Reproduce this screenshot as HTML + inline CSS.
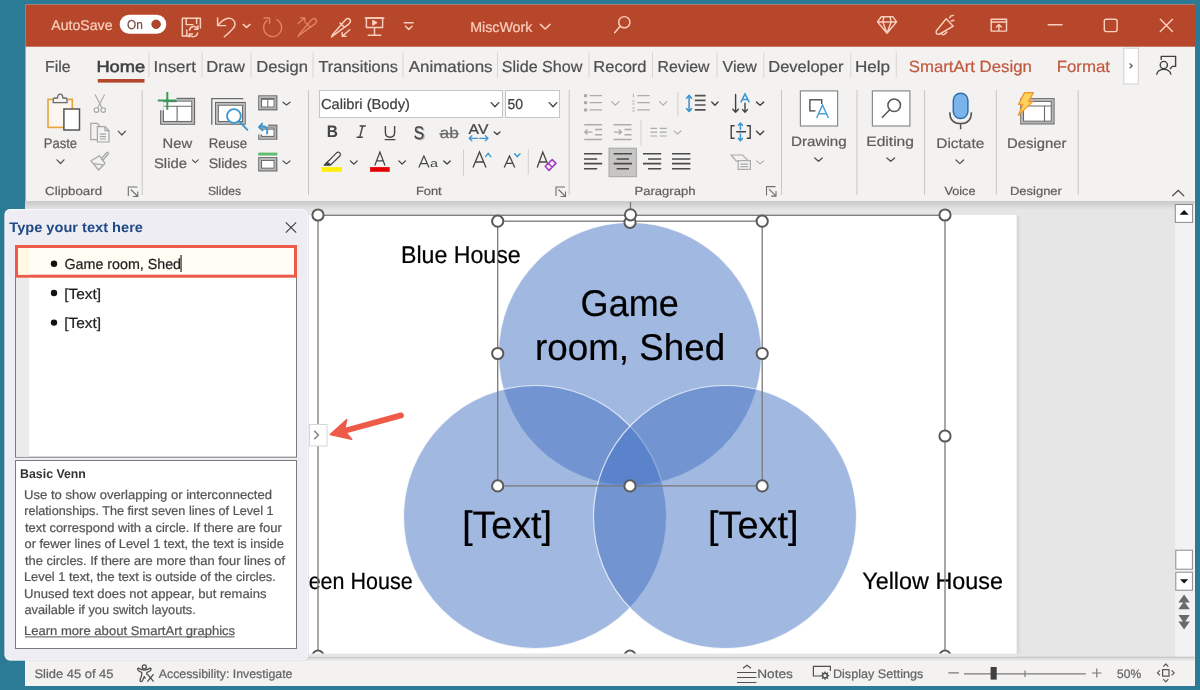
<!DOCTYPE html>
<html><head><meta charset="utf-8"><title>PowerPoint</title>
<style>
html,body{margin:0;padding:0;width:1200px;height:690px;overflow:hidden;background:#2C7B96;font-family:"Liberation Sans",sans-serif}
svg{position:absolute;left:0;top:0;display:block;will-change:transform}
</style></head><body>
<svg width="1200" height="690" viewBox="0 0 1200 690" text-rendering="geometricPrecision">
<rect x="0" y="0" width="1200" height="690" fill="#2C7B96"/>
<rect x="25.5" y="4.5" width="1169.5" height="681.5" fill="#F3F2F1"/>
<rect x="25.5" y="4.5" width="1169.5" height="42.2" fill="#B7472A"/>
<rect x="25" y="201" width="1169.5" height="459.5" fill="#E6E6E6"/>
<defs><linearGradient id="rsh" x1="0" y1="0" x2="0" y2="1"><stop offset="0" stop-color="#C8C8C8"/><stop offset="1" stop-color="#E6E6E6"/></linearGradient></defs>
<rect x="25" y="201" width="1169.5" height="9" fill="url(#rsh)"/>
<rect x="1175" y="204" width="20" height="452.7" fill="#F2F2F2"/>
<defs><linearGradient id="ssh" x1="0" y1="0" x2="1" y2="0"><stop offset="0" stop-color="#D2D2D2"/><stop offset="1" stop-color="#E6E6E6"/></linearGradient></defs>
<rect x="1016.5" y="216" width="5" height="438" fill="url(#ssh)"/>
<rect x="250" y="215" width="766.6" height="438.7" fill="#FFFFFF"/>
<rect x="25" y="656.7" width="1169.5" height="1.3" fill="#C8C8C8"/>
<rect x="25" y="658" width="1169.5" height="2.5" fill="#E0E0E0"/>
<rect x="25" y="660.5" width="1169.5" height="25.5" fill="#F3F2F1"/>
<text x="51.30" y="30.2" style="font-size:14.1px;font-weight:400;font-family:&quot;Liberation Sans&quot;" fill="#F9D0BF" textLength="61.24" lengthAdjust="spacingAndGlyphs"  stroke="#F9D0BF" stroke-width="0.22">AutoSave</text>
<text x="470.20" y="31.8" style="font-size:14.24px;font-weight:400;font-family:&quot;Liberation Sans&quot;" fill="#F9D0BF" textLength="62.22" lengthAdjust="spacingAndGlyphs"  stroke="#F9D0BF" stroke-width="0.22">MiscWork</text>
<text x="45.10" y="71.7" style="font-size:15.84px;font-weight:400;font-family:&quot;Liberation Sans&quot;" fill="#505050" textLength="25.51" lengthAdjust="spacingAndGlyphs"  stroke="#505050" stroke-width="0.22">File</text>
<text x="96.41" y="71.7" style="font-size:15.84px;font-weight:400;font-family:&quot;Liberation Sans&quot;" fill="#404040" textLength="48.79" lengthAdjust="spacingAndGlyphs" stroke="#404040" stroke-width="0.55">Home</text>
<text x="153.50" y="71.7" style="font-size:15.84px;font-weight:400;font-family:&quot;Liberation Sans&quot;" fill="#505050" textLength="42.41" lengthAdjust="spacingAndGlyphs"  stroke="#505050" stroke-width="0.22">Insert</text>
<text x="206.24" y="71.7" style="font-size:15.84px;font-weight:400;font-family:&quot;Liberation Sans&quot;" fill="#505050" textLength="38.69" lengthAdjust="spacingAndGlyphs"  stroke="#505050" stroke-width="0.22">Draw</text>
<text x="256.24" y="71.7" style="font-size:15.84px;font-weight:400;font-family:&quot;Liberation Sans&quot;" fill="#505050" textLength="51.82" lengthAdjust="spacingAndGlyphs"  stroke="#505050" stroke-width="0.22">Design</text>
<text x="318.44" y="71.7" style="font-size:15.84px;font-weight:400;font-family:&quot;Liberation Sans&quot;" fill="#505050" textLength="79.60" lengthAdjust="spacingAndGlyphs"  stroke="#505050" stroke-width="0.22">Transitions</text>
<text x="408.75" y="71.7" style="font-size:15.84px;font-weight:400;font-family:&quot;Liberation Sans&quot;" fill="#505050" textLength="83.80" lengthAdjust="spacingAndGlyphs"  stroke="#505050" stroke-width="0.22">Animations</text>
<text x="501.79" y="71.7" style="font-size:15.84px;font-weight:400;font-family:&quot;Liberation Sans&quot;" fill="#505050" textLength="80.65" lengthAdjust="spacingAndGlyphs"  stroke="#505050" stroke-width="0.22">Slide Show</text>
<text x="593.25" y="71.7" style="font-size:15.84px;font-weight:400;font-family:&quot;Liberation Sans&quot;" fill="#505050" textLength="53.31" lengthAdjust="spacingAndGlyphs"  stroke="#505050" stroke-width="0.22">Record</text>
<text x="657.55" y="71.7" style="font-size:15.84px;font-weight:400;font-family:&quot;Liberation Sans&quot;" fill="#505050" textLength="51.89" lengthAdjust="spacingAndGlyphs"  stroke="#505050" stroke-width="0.22">Review</text>
<text x="722.50" y="71.7" style="font-size:15.84px;font-weight:400;font-family:&quot;Liberation Sans&quot;" fill="#505050" textLength="34.44" lengthAdjust="spacingAndGlyphs"  stroke="#505050" stroke-width="0.22">View</text>
<text x="768.25" y="71.7" style="font-size:15.84px;font-weight:400;font-family:&quot;Liberation Sans&quot;" fill="#505050" textLength="75.18" lengthAdjust="spacingAndGlyphs"  stroke="#505050" stroke-width="0.22">Developer</text>
<text x="854.95" y="71.7" style="font-size:15.84px;font-weight:400;font-family:&quot;Liberation Sans&quot;" fill="#505050" textLength="35.20" lengthAdjust="spacingAndGlyphs"  stroke="#505050" stroke-width="0.22">Help</text>
<text x="908.78" y="71.7" style="font-size:16.28px;font-weight:400;font-family:&quot;Liberation Sans&quot;" fill="#C25840" textLength="123.06" lengthAdjust="spacingAndGlyphs"  stroke="#C25840" stroke-width="0.22">SmartArt Design</text>
<text x="1056.65" y="71.7" style="font-size:16.28px;font-weight:400;font-family:&quot;Liberation Sans&quot;" fill="#C25840" textLength="53.37" lengthAdjust="spacingAndGlyphs"  stroke="#C25840" stroke-width="0.22">Format</text>
<rect x="97.8" y="79" width="46.7" height="3.6" fill="#B7472A"/>
<rect x="148.5" y="52.5" width="1" height="25" fill="#D8D6D4"/>
<rect x="201.5" y="52.5" width="1" height="25" fill="#D8D6D4"/>
<rect x="250.5" y="52.5" width="1" height="25" fill="#D8D6D4"/>
<rect x="312.5" y="52.5" width="1" height="25" fill="#D8D6D4"/>
<rect x="402.5" y="52.5" width="1" height="25" fill="#D8D6D4"/>
<rect x="497.0" y="52.5" width="1" height="25" fill="#D8D6D4"/>
<rect x="588.5" y="52.5" width="1" height="25" fill="#D8D6D4"/>
<rect x="652.0" y="52.5" width="1" height="25" fill="#D8D6D4"/>
<rect x="716.5" y="52.5" width="1" height="25" fill="#D8D6D4"/>
<rect x="763.25" y="52.5" width="1" height="25" fill="#D8D6D4"/>
<rect x="850.25" y="52.5" width="1" height="25" fill="#D8D6D4"/>
<rect x="895.75" y="52.5" width="1" height="25" fill="#D8D6D4"/>
<text x="43.76" y="148.05" style="font-size:13.74px;font-weight:400;font-family:&quot;Liberation Sans&quot;" fill="#605E5C" textLength="33.36" lengthAdjust="spacingAndGlyphs"  stroke="#605E5C" stroke-width="0.22">Paste</text>
<text x="45.13" y="195.4" style="font-size:11.77px;font-weight:400;font-family:&quot;Liberation Sans&quot;" fill="#605E5C" textLength="57.01" lengthAdjust="spacingAndGlyphs"  stroke="#605E5C" stroke-width="0.22">Clipboard</text>
<text x="162.62" y="148.05" style="font-size:13.74px;font-weight:400;font-family:&quot;Liberation Sans&quot;" fill="#605E5C" textLength="29.60" lengthAdjust="spacingAndGlyphs"  stroke="#605E5C" stroke-width="0.22">New</text>
<text x="153.95" y="167.7" style="font-size:13.74px;font-weight:400;font-family:&quot;Liberation Sans&quot;" fill="#605E5C" textLength="33.03" lengthAdjust="spacingAndGlyphs"  stroke="#605E5C" stroke-width="0.22">Slide</text>
<text x="208.63" y="148.05" style="font-size:13.74px;font-weight:400;font-family:&quot;Liberation Sans&quot;" fill="#605E5C" textLength="38.59" lengthAdjust="spacingAndGlyphs"  stroke="#605E5C" stroke-width="0.22">Reuse</text>
<text x="208.68" y="167.7" style="font-size:13.74px;font-weight:400;font-family:&quot;Liberation Sans&quot;" fill="#605E5C" textLength="38.50" lengthAdjust="spacingAndGlyphs"  stroke="#605E5C" stroke-width="0.22">Slides</text>
<text x="207.99" y="195.4" style="font-size:11.77px;font-weight:400;font-family:&quot;Liberation Sans&quot;" fill="#605E5C" textLength="33.01" lengthAdjust="spacingAndGlyphs"  stroke="#605E5C" stroke-width="0.22">Slides</text>
<text x="415.92" y="195.4" style="font-size:11.77px;font-weight:400;font-family:&quot;Liberation Sans&quot;" fill="#605E5C" textLength="25.76" lengthAdjust="spacingAndGlyphs"  stroke="#605E5C" stroke-width="0.22">Font</text>
<text x="634.50" y="195.4" style="font-size:11.77px;font-weight:400;font-family:&quot;Liberation Sans&quot;" fill="#605E5C" textLength="61.03" lengthAdjust="spacingAndGlyphs"  stroke="#605E5C" stroke-width="0.22">Paragraph</text>
<text x="791.02" y="145.75" style="font-size:13.59px;font-weight:400;font-family:&quot;Liberation Sans&quot;" fill="#605E5C" textLength="55.74" lengthAdjust="spacingAndGlyphs"  stroke="#605E5C" stroke-width="0.22">Drawing</text>
<text x="866.24" y="145.75" style="font-size:13.59px;font-weight:400;font-family:&quot;Liberation Sans&quot;" fill="#605E5C" textLength="47.75" lengthAdjust="spacingAndGlyphs"  stroke="#605E5C" stroke-width="0.22">Editing</text>
<text x="936.28" y="148.1" style="font-size:13.95px;font-weight:400;font-family:&quot;Liberation Sans&quot;" fill="#605E5C" textLength="48.03" lengthAdjust="spacingAndGlyphs"  stroke="#605E5C" stroke-width="0.22">Dictate</text>
<text x="944.50" y="195.4" style="font-size:11.77px;font-weight:400;font-family:&quot;Liberation Sans&quot;" fill="#605E5C" textLength="30.98" lengthAdjust="spacingAndGlyphs"  stroke="#605E5C" stroke-width="0.22">Voice</text>
<text x="1007.03" y="148.1" style="font-size:13.95px;font-weight:400;font-family:&quot;Liberation Sans&quot;" fill="#605E5C" textLength="59.43" lengthAdjust="spacingAndGlyphs"  stroke="#605E5C" stroke-width="0.22">Designer</text>
<text x="1010.01" y="195.4" style="font-size:11.77px;font-weight:400;font-family:&quot;Liberation Sans&quot;" fill="#605E5C" textLength="51.87" lengthAdjust="spacingAndGlyphs"  stroke="#605E5C" stroke-width="0.22">Designer</text>
<rect x="141.7" y="90" width="1" height="105" fill="#C8C6C4"/>
<rect x="308.0" y="90" width="1" height="105" fill="#C8C6C4"/>
<rect x="568.7" y="90" width="1" height="105" fill="#C8C6C4"/>
<rect x="781.0" y="90" width="1" height="105" fill="#C8C6C4"/>
<rect x="856.5" y="90" width="1" height="105" fill="#C8C6C4"/>
<rect x="924.1" y="90" width="1" height="105" fill="#C8C6C4"/>
<rect x="995.8" y="90" width="1" height="105" fill="#C8C6C4"/>
<rect x="1077.7" y="90" width="1" height="105" fill="#C8C6C4"/>
<rect x="319.5" y="90.5" width="183" height="27" fill="#FFF" stroke="#C8C6C4" stroke-width="1"/>
<rect x="505.5" y="90.5" width="54" height="27" fill="#FFF" stroke="#C8C6C4" stroke-width="1"/>
<text x="320.99" y="109.2" style="font-size:14.39px;font-weight:400;font-family:&quot;Liberation Sans&quot;" fill="#404040" textLength="88.92" lengthAdjust="spacingAndGlyphs"  stroke="#404040" stroke-width="0.22">Calibri (Body)</text>
<text x="507.51" y="109.2" style="font-size:14.39px;font-weight:400;font-family:&quot;Liberation Sans&quot;" fill="#404040" textLength="15.57" lengthAdjust="spacingAndGlyphs"  stroke="#404040" stroke-width="0.22">50</text>
<g fill="#4472C4" fill-opacity="0.5" stroke="#FFFFFF" stroke-width="1.2" stroke-opacity="0.7"><circle cx="630" cy="354" r="131.5"/><circle cx="535" cy="517" r="131.5"/><circle cx="725" cy="517" r="131.5"/></g>
<text x="580.61" y="315.8" style="font-size:37.21px;font-weight:400;font-family:&quot;Liberation Sans&quot;" fill="#000" textLength="98.15" lengthAdjust="spacingAndGlyphs"  stroke="#000" stroke-width="0.22">Game</text>
<text x="535.10" y="359.8" style="font-size:37.21px;font-weight:400;font-family:&quot;Liberation Sans&quot;" fill="#000" textLength="190.06" lengthAdjust="spacingAndGlyphs"  stroke="#000" stroke-width="0.22">room, Shed</text>
<text x="462.15" y="537.6" style="font-size:38.23px;font-weight:400;font-family:&quot;Liberation Sans&quot;" fill="#000" textLength="89.77" lengthAdjust="spacingAndGlyphs"  stroke="#000" stroke-width="0.22">[Text]</text>
<text x="708.04" y="537.6" style="font-size:38.23px;font-weight:400;font-family:&quot;Liberation Sans&quot;" fill="#000" textLength="90.40" lengthAdjust="spacingAndGlyphs"  stroke="#000" stroke-width="0.22">[Text]</text>
<text x="400.99" y="263.4" style="font-size:24.27px;font-weight:400;font-family:&quot;Liberation Sans&quot;" fill="#000" textLength="119.66" lengthAdjust="spacingAndGlyphs"  stroke="#000" stroke-width="0.22">Blue House</text>
<text x="862.21" y="589" style="font-size:23.69px;font-weight:400;font-family:&quot;Liberation Sans&quot;" fill="#000" textLength="140.75" lengthAdjust="spacingAndGlyphs"  stroke="#000" stroke-width="0.22">Yellow House</text>
<text x="284.79" y="588.9" style="font-size:23.4px;font-weight:400;font-family:&quot;Liberation Sans&quot;" fill="#000" textLength="127.84" lengthAdjust="spacingAndGlyphs"  stroke="#000" stroke-width="0.22">Green House</text>
<defs><clipPath id="frclip"><rect x="250" y="200" width="766" height="453.7"/></clipPath></defs>
<g fill="none" stroke="#7A7A7A" stroke-width="1.3" clip-path="url(#frclip)"><rect x="318" y="215.3" width="627" height="460"/><rect x="497.7" y="221.2" width="264.5" height="264.7"/><line x1="630.5" y1="202" x2="630.5" y2="209"/></g>
<circle cx="318" cy="215" r="5.6" fill="#FFF" stroke="#5A5A5A" stroke-width="2"/>
<circle cx="945" cy="215" r="5.6" fill="#FFF" stroke="#5A5A5A" stroke-width="2"/>
<circle cx="945" cy="436" r="5.6" fill="#FFF" stroke="#5A5A5A" stroke-width="2"/>
<circle cx="497.7" cy="221.2" r="5.6" fill="#FFF" stroke="#5A5A5A" stroke-width="2"/>
<circle cx="762.2" cy="221.2" r="5.6" fill="#FFF" stroke="#5A5A5A" stroke-width="2"/>
<circle cx="497.7" cy="353.5" r="5.6" fill="#FFF" stroke="#5A5A5A" stroke-width="2"/>
<circle cx="762.2" cy="353.5" r="5.6" fill="#FFF" stroke="#5A5A5A" stroke-width="2"/>
<circle cx="497.7" cy="485.9" r="5.6" fill="#FFF" stroke="#5A5A5A" stroke-width="2"/>
<circle cx="630" cy="485.9" r="5.6" fill="#FFF" stroke="#5A5A5A" stroke-width="2"/>
<circle cx="762.2" cy="485.9" r="5.6" fill="#FFF" stroke="#5A5A5A" stroke-width="2"/>
<circle cx="630" cy="222.3" r="5.6" fill="#FFF" stroke="#5A5A5A" stroke-width="2"/>
<circle cx="630.5" cy="214.8" r="5.6" fill="#FFF" stroke="#5A5A5A" stroke-width="2"/>
<g clip-path="url(#slclip)">
<defs><clipPath id="slclip"><rect x="250" y="215" width="766" height="438.7"/></clipPath></defs>
<circle cx="318" cy="656.2" r="5.6" fill="#FFF" stroke="#5A5A5A" stroke-width="2"/>
<circle cx="630" cy="656.2" r="5.6" fill="#FFF" stroke="#5A5A5A" stroke-width="2"/>
<circle cx="945" cy="656.2" r="5.6" fill="#FFF" stroke="#5A5A5A" stroke-width="2"/>
</g>
<rect x="250" y="653.7" width="766" height="3" fill="#E6E6E6"/>
<rect x="4.5" y="209" width="304" height="451.5" rx="5.5" fill="#BFC6CC"/>
<rect x="5.2" y="209.7" width="302.6" height="450.1" rx="5" fill="#EEEDF4" stroke="#F6F8FC" stroke-width="1.2"/>
<text x="9.30" y="232" style="font-size:13.95px;font-weight:700;font-family:&quot;Liberation Sans&quot;" fill="#1E4A86" textLength="133.68" lengthAdjust="spacingAndGlyphs" >Type your text here</text>
<g stroke="#444" stroke-width="1.25"><line x1="285.8" y1="222.4" x2="296.2" y2="232.6"/><line x1="296.2" y1="222.4" x2="285.8" y2="232.6"/></g>
<rect x="15.5" y="245.5" width="281" height="211.7" fill="#FFF" stroke="#7A7A7A" stroke-width="1"/>
<rect x="16" y="246" width="13.3" height="210.7" fill="#EBEBEB"/>
<rect x="16.5" y="246.5" width="279" height="29.7" fill="#FFFDF4" stroke="#EE5A4A" stroke-width="3"/>
<rect x="18" y="248" width="11.3" height="26.7" fill="#FFF8E2"/>
<circle cx="54" cy="263.7" r="3.2" fill="#111"/>
<circle cx="54" cy="293" r="3.2" fill="#111"/>
<circle cx="54" cy="322.6" r="3.2" fill="#111"/>
<text x="64.51" y="268.9" style="font-size:14.53px;font-weight:400;font-family:&quot;Liberation Sans&quot;" fill="#1E1E1E" textLength="116.55" lengthAdjust="spacingAndGlyphs"  stroke="#1E1E1E" stroke-width="0.22">Game room, Shed</text>
<text x="64.16" y="298.7" style="font-size:14.83px;font-weight:400;font-family:&quot;Liberation Sans&quot;" fill="#1E1E1E" textLength="36.90" lengthAdjust="spacingAndGlyphs"  stroke="#1E1E1E" stroke-width="0.22">[Text]</text>
<text x="64.16" y="327.8" style="font-size:14.83px;font-weight:400;font-family:&quot;Liberation Sans&quot;" fill="#1E1E1E" textLength="36.90" lengthAdjust="spacingAndGlyphs"  stroke="#1E1E1E" stroke-width="0.22">[Text]</text>
<rect x="180.5" y="255" width="1.1" height="17" fill="#111"/>
<rect x="15.5" y="460.5" width="281" height="188" fill="#FFF" stroke="#7A7A7A" stroke-width="1"/>
<text x="20.12" y="477.8" style="font-size:12.65px;font-weight:700;font-family:&quot;Liberation Sans&quot;" fill="#333" textLength="65.79" lengthAdjust="spacingAndGlyphs" >Basic Venn</text>
<text x="24.07" y="498.7" style="font-size:12.65px;font-weight:400;font-family:&quot;Liberation Sans&quot;" fill="#555555" textLength="247.89" lengthAdjust="spacingAndGlyphs"  stroke="#555555" stroke-width="0.22">Use to show overlapping or interconnected</text>
<text x="24.20" y="515.23" style="font-size:12.65px;font-weight:400;font-family:&quot;Liberation Sans&quot;" fill="#555555" textLength="249.34" lengthAdjust="spacingAndGlyphs"  stroke="#555555" stroke-width="0.22">relationships. The first seven lines of Level 1</text>
<text x="24.90" y="531.76" style="font-size:12.65px;font-weight:400;font-family:&quot;Liberation Sans&quot;" fill="#555555" textLength="256.82" lengthAdjust="spacingAndGlyphs"  stroke="#555555" stroke-width="0.22">text correspond with a circle. If there are four</text>
<text x="24.49" y="548.29" style="font-size:12.65px;font-weight:400;font-family:&quot;Liberation Sans&quot;" fill="#555555" textLength="259.45" lengthAdjust="spacingAndGlyphs"  stroke="#555555" stroke-width="0.22">or fewer lines of Level 1 text, the text is inside</text>
<text x="24.90" y="564.8199999999999" style="font-size:12.65px;font-weight:400;font-family:&quot;Liberation Sans&quot;" fill="#555555" textLength="260.11" lengthAdjust="spacingAndGlyphs"  stroke="#555555" stroke-width="0.22">the circles. If there are more than four lines of</text>
<text x="23.99" y="581.35" style="font-size:12.65px;font-weight:400;font-family:&quot;Liberation Sans&quot;" fill="#555555" textLength="251.85" lengthAdjust="spacingAndGlyphs"  stroke="#555555" stroke-width="0.22">Level 1 text, the text is outside of the circles.</text>
<text x="24.07" y="597.88" style="font-size:12.65px;font-weight:400;font-family:&quot;Liberation Sans&quot;" fill="#555555" textLength="242.37" lengthAdjust="spacingAndGlyphs"  stroke="#555555" stroke-width="0.22">Unused text does not appear, but remains</text>
<text x="24.49" y="614.41" style="font-size:12.65px;font-weight:400;font-family:&quot;Liberation Sans&quot;" fill="#555555" textLength="171.33" lengthAdjust="spacingAndGlyphs"  stroke="#555555" stroke-width="0.22">available if you switch layouts.</text>
<text x="23.97" y="635.4" style="font-size:12.65px;font-weight:400;font-family:&quot;Liberation Sans&quot;" fill="#555555" textLength="211.17" lengthAdjust="spacingAndGlyphs"  stroke="#555555" stroke-width="0.22">Learn more about SmartArt graphics</text>
<rect x="25" y="636.4" width="209.7" height="1" fill="#555555"/>
<text x="34.48" y="678" style="font-size:12.35px;font-weight:400;font-family:&quot;Liberation Sans&quot;" fill="#646464" textLength="79.01" lengthAdjust="spacingAndGlyphs"  stroke="#646464" stroke-width="0.22">Slide 45 of 45</text>
<text x="158.75" y="678" style="font-size:12.35px;font-weight:400;font-family:&quot;Liberation Sans&quot;" fill="#646464" textLength="133.72" lengthAdjust="spacingAndGlyphs"  stroke="#646464" stroke-width="0.22">Accessibility: Investigate</text>
<text x="757.19" y="678.3" style="font-size:12.35px;font-weight:400;font-family:&quot;Liberation Sans&quot;" fill="#646464" textLength="35.72" lengthAdjust="spacingAndGlyphs"  stroke="#646464" stroke-width="0.22">Notes</text>
<text x="832.98" y="678.3" style="font-size:12.35px;font-weight:400;font-family:&quot;Liberation Sans&quot;" fill="#646464" textLength="90.40" lengthAdjust="spacingAndGlyphs"  stroke="#646464" stroke-width="0.22">Display Settings</text>
<text x="1117.11" y="678.3" style="font-size:12.35px;font-weight:400;font-family:&quot;Liberation Sans&quot;" fill="#646464" textLength="24.06" lengthAdjust="spacingAndGlyphs"  stroke="#646464" stroke-width="0.22">50%</text>
<g fill="none" stroke="#F9D0BF" stroke-width="1.45" stroke-linecap="round" stroke-linejoin="round"><path d="M200.4,28 V18.3 H182.3 V36 H188.4"/><path d="M186.2,18.3 V24.6 H193 M196.6,18.3 V23.6"/><path d="M186.8,36 V30"/><path d="M189.6,30.2 A4.2,4.2 0 0 1 197.6,29"/><path d="M197.9,25.8 V29.3 H194.6"/><path d="M197.6,33 A4.2,4.2 0 0 1 189.6,34.2"/><path d="M189.3,37 V34 H192.6"/><path d="M217.6,18 V25.6 H225.5"/><path d="M218.2,25 C221.5,21 225,18.2 228.6,18.2 C232.5,18.2 235,21 235,24.6 C235,28.3 229.5,32.5 224.3,36.8"/><path d="M243.2,24.4 L246.6,27.4 L250,24.4"/><path d="M404.3,22.7 H413.2"/><path d="M405.5,26.2 L408.8,29.4 L412,26.2"/><path d="M365.2,18 H383.8"/><rect x="366.4" y="18" width="16.2" height="9.4"/><path d="M372.9,20.6 L376.6,22.7 L372.9,24.8 Z" fill="#F9D0BF"/><path d="M374.5,27.4 V35.3 M368.2,35.3 H380.8"/><path d="M333.2,35.6 L331.5,37 L332.5,34.8 L345.3,20 Q347.6,17.4 349.7,19.3 Q351.5,21.2 349.3,23.6 Z"/><path d="M340,23 L344.5,27.2"/><path d="M342.2,36.2 L349.8,29.8 M342.2,36.2 H346 M342.2,36.2 V32.4"/><circle cx="624.3" cy="22.2" r="5.6"/><path d="M620.3,26.2 L614.6,32.8"/><path d="M881.3,16.8 H893 L896.6,21.9 L887,33.2 L877.5,21.9 Z M877.5,21.9 H896.6 M884,16.8 L882.8,21.9 L887,33.2 L891.2,21.9 L890,16.8"/><path d="M936.4,30.8 L946.2,18.8 L953.2,26.2 L939.8,34 Q935.2,35.2 936.4,30.8 Z"/><path d="M941.4,33.4 Q943.2,36.6 946.8,32"/><path d="M949.6,17.8 L951.2,15.8 M951.4,21 L953.8,20.2 M952.6,15.7 L953.4,15.3"/><rect x="991.2" y="19.2" width="15.3" height="11.9"/><path d="M991.2,22 H1006.5 M998.9,30.6 V24.6 M996.4,27 L998.9,24.5 L1001.4,27"/><path d="M1048.2,24.8 H1062"/><rect x="1104.3" y="19.2" width="12.8" height="12.4" rx="2"/><path d="M1160.3,19.2 L1172.5,31.5 M1172.5,19.2 L1160.3,31.5"/></g>
<g fill="none" stroke="#E48467" stroke-width="1.3" stroke-linecap="round" stroke-linejoin="round"><path d="M267.2,20.4 A9,9 0 1 0 276.6,19.5"/><path d="M264,18 H269.6 V23.6"/><path d="M299.2,35.2 L298,36.7 L299.3,34.2 L311.3,20 Q313.6,17.4 315.7,19.3 Q317.5,21.2 315.3,23.6 Z"/><path d="M306,23 L310.5,27.2"/><path d="M298,23.5 L304.8,17.8 M304.8,17.8 H300.6 M304.8,17.8 V22"/></g>
<rect x="119.7" y="14.7" width="46.6" height="19.1" rx="9.55" fill="#FFFFFF"/>
<circle cx="156.1" cy="24.3" r="4.3" fill="#B04628" stroke="#8E3A24" stroke-width="0.8"/>
<text x="126.95" y="28.9" style="font-size:12.94px;font-weight:400;font-family:&quot;Liberation Sans&quot;" fill="#7A4A40" textLength="15.78" lengthAdjust="spacingAndGlyphs"  stroke="#7A4A40" stroke-width="0.22">On</text>
<rect x="48" y="99.4" width="24.3" height="28" fill="#FBF6EE" stroke="#E8A33A" stroke-width="1.6"/>
<path d="M53.2,102.6 V99.4 Q53.2,98 55,98 H57.5 Q57.8,94.2 60.2,94.2 Q62.6,94.2 62.9,98 H65.2 Q67,98 67,99.4 V102.6 Z" fill="#F3F2F1" stroke="#6A6A6A" stroke-width="1.3"/>
<rect x="63.9" y="109" width="15.6" height="21" fill="#FFFFFF" stroke="#555" stroke-width="1.5"/>
<path d="M57,159.8 L60.5,163.5 L64,159.8" fill="none" stroke="#505050" stroke-width="1.2" stroke-linecap="round" stroke-linejoin="round"/>
<g fill="none" stroke="#A6A6A6" stroke-width="1.1"><circle cx="96.4" cy="110.1" r="2.3"/><circle cx="103.2" cy="110.1" r="2.3"/><path d="M97.6,108 L104.6,94.4 M102,108 L95,94.4"/></g>
<g fill="none" stroke="#A6A6A6" stroke-width="1.2"><path d="M97,139.6 H90.8 V123.3 H97.2 L99.8,126"/><path d="M97.4,126.6 H105 L109,130.6 V142 H97.4 Z M105,126.6 V130.6 H109"/><path d="M99.8,134.2 H106 M99.8,136.6 H106 M99.8,139 H106"/></g>
<path d="M118.2,131.2 L121.85,135 L125.5,131.2" fill="none" stroke="#505050" stroke-width="1.2" stroke-linecap="round" stroke-linejoin="round"/>
<g fill="none" stroke="#A6A6A6" stroke-width="1.3" stroke-linejoin="round"><path d="M99.6,155.8 L91,160.8 L98.6,170 L105,163.4 Z"/><path d="M93.4,163.6 L102.8,164.8"/></g>
<path d="M102.6,158.8 L107.4,153.4" stroke="#A6A6A6" stroke-width="3.4" stroke-linecap="round"/><path d="M102.6,158.8 L107.4,153.4" stroke="#F3F2F1" stroke-width="1" stroke-linecap="round"/>
<g fill="none" stroke="#6E6E6E" stroke-width="1.1"><path d="M128.3,196 V187 H137.3"/><path d="M130.8,189.5 L137.8,196.5 M137.8,191.5 V196.5 H132.8"/></g>
<g fill="none" stroke="#6E6E6E" stroke-width="1.1"><path d="M556,196 V187 H565"/><path d="M558.5,189.5 L565.5,196.5 M565.5,191.5 V196.5 H560.5"/></g>
<g fill="none" stroke="#6E6E6E" stroke-width="1.1"><path d="M766.5,195.6 V186.6 H775.5"/><path d="M769.0,189.1 L776.0,196.1 M776.0,191.1 V196.1 H771.0"/></g>
<rect x="160.75" y="98.45" width="33.7" height="25.7" fill="#FFFFFF" stroke="#6A6A6A" stroke-width="1.3"/>
<rect x="162.1" y="99.8" width="31.0" height="23.0" fill="none" stroke="#B4B4B4" stroke-width="1.4"/>
<rect x="163.4" y="101.1" width="28.4" height="20.4" fill="#FFFFFF" stroke="#6A6A6A" stroke-width="1.1"/>
<path d="M163.4,106.3 H191.8 M177.1,106.3 V121.5" stroke="#6A6A6A" stroke-width="1.1"/>
<path d="M157,91 H176.5 V101.6 H163.8 V110.2 H157 Z" fill="#F3F2F1"/>
<path d="M163.4,101.6 H176.5" stroke="#6A6A6A" stroke-width="1.1" fill="none"/>
<path d="M157.8,100.6 H176.7 M167.3,92 V109.7" stroke="#3A9B58" stroke-width="2"/>
<path d="M192.4,159.9 L195.3,162.6 L198.2,159.9" fill="none" stroke="#505050" stroke-width="1.2" stroke-linecap="round" stroke-linejoin="round"/>
<path d="M211.8,124.8 V98.7 H243.3" fill="none" stroke="#6A6A6A" stroke-width="1.3"/>
<rect x="215.65" y="102.55000000000001" width="29.50000000000001" height="21.59999999999999" fill="#FFFFFF" stroke="#6A6A6A" stroke-width="1.3"/>
<rect x="217" y="103.9" width="26.80000000000001" height="18.89999999999999" fill="none" stroke="#B4B4B4" stroke-width="1.4"/>
<rect x="218.3" y="105.2" width="24.20000000000001" height="16.29999999999999" fill="#FFFFFF" stroke="#6A6A6A" stroke-width="1.1"/>
<circle cx="233.9" cy="116" r="6.9" fill="#FFFFFF" stroke="#3C96D0" stroke-width="1.8"/><path d="M238.8,121 L247.4,129.8" stroke="#3C96D0" stroke-width="1.8" stroke-linecap="round"/>
<rect x="258.84999999999997" y="95.95" width="17.899999999999988" height="13.800000000000008" fill="#FFFFFF" stroke="#6A6A6A" stroke-width="1.3"/>
<rect x="260.2" y="97.3" width="15.199999999999989" height="11.100000000000009" fill="none" stroke="#B4B4B4" stroke-width="1.4"/>
<rect x="261.5" y="98.6" width="12.599999999999989" height="8.500000000000009" fill="#FFFFFF" stroke="#6A6A6A" stroke-width="1.1"/>
<path d="M261.5,99.3 H274 M267.8,99.3 V107" stroke="#6A6A6A" stroke-width="1"/>
<path d="M283,102.2 L286.5,105 L290,102.2" fill="none" stroke="#505050" stroke-width="1.2" stroke-linecap="round" stroke-linejoin="round"/>
<rect x="258.84999999999997" y="125.25" width="17.899999999999988" height="13.799999999999994" fill="#FFFFFF" stroke="#6A6A6A" stroke-width="1.3"/>
<rect x="260.2" y="126.6" width="15.199999999999989" height="11.099999999999994" fill="none" stroke="#B4B4B4" stroke-width="1.4"/>
<rect x="261.5" y="127.89999999999999" width="12.599999999999989" height="8.499999999999995" fill="#FFFFFF" stroke="#6A6A6A" stroke-width="1.1"/>
<path d="M261.8,129.2 H274.4" stroke="#6A6A6A" stroke-width="1"/>
<path d="M256.4,121.4 H268 V126.4 H262 V134.6 H256.4 Z" fill="#F3F2F1"/>
<path d="M259.6,127.2 Q265.4,124.6 267,129 Q267.6,131 267,133.6 M262.2,123.6 L259,127.2 L262.6,130.2" fill="none" stroke="#3C96D0" stroke-width="1.9" stroke-linejoin="round" stroke-linecap="round"/>
<rect x="258.2" y="152.6" width="19.2" height="2.9" fill="#5DBB72"/>
<rect x="258.84999999999997" y="157.75" width="17.899999999999988" height="13.100000000000005" fill="#FFFFFF" stroke="#6A6A6A" stroke-width="1.3"/>
<rect x="260.2" y="159.1" width="15.199999999999989" height="10.400000000000006" fill="none" stroke="#B4B4B4" stroke-width="1.4"/>
<rect x="261.5" y="160.4" width="12.599999999999989" height="7.800000000000006" fill="#FFFFFF" stroke="#6A6A6A" stroke-width="1.1"/>
<path d="M283,161 L286.5,163.9 L290,161" fill="none" stroke="#505050" stroke-width="1.2" stroke-linecap="round" stroke-linejoin="round"/>
<path d="M491.2,102.6 L495.0,106.8 L498.8,102.6" fill="none" stroke="#404040" stroke-width="1.3" stroke-linecap="round" stroke-linejoin="round"/>
<path d="M549.2,102.6 L553.0,106.8 L556.8,102.6" fill="none" stroke="#404040" stroke-width="1.3" stroke-linecap="round" stroke-linejoin="round"/>
<text x="326.68" y="137.3" style="font-size:16.57px;font-weight:700;font-family:&quot;Liberation Sans&quot;" fill="#444444" textLength="11.14" lengthAdjust="spacingAndGlyphs" >B</text>
<path d="M359.6,126 H365.8 M356.6,137.3 H362.8 M362.7,126 L359.7,137.3" stroke="#444444" stroke-width="1.4" fill="none"/>
<path d="M385.4,125.9 V132.6 Q385.4,137.3 390,137.3 Q394.6,137.3 394.6,132.6 V125.9 M384.7,139.6 H395.4" stroke="#444444" stroke-width="1.4" fill="none"/>
<text x="414.92" y="140" style="font-size:18.31px;font-weight:400;font-family:&quot;Liberation Sans&quot;" fill="#B4B4B4" textLength="10.37" lengthAdjust="spacingAndGlyphs"  stroke="#B4B4B4" stroke-width="0.22">S</text>
<text x="413.71" y="138.8" style="font-size:18.31px;font-weight:400;font-family:&quot;Liberation Sans&quot;" fill="#444444" textLength="10.48" lengthAdjust="spacingAndGlyphs"  stroke="#444444" stroke-width="0.22">S</text>
<text x="439.83" y="138.3" style="font-size:15.26px;font-weight:400;font-family:&quot;Liberation Sans&quot;" fill="#6A6A6A" textLength="18.82" lengthAdjust="spacingAndGlyphs"  stroke="#6A6A6A" stroke-width="0.22">ab</text>
<path d="M439.3,133.8 H459.1" stroke="#6A6A6A" stroke-width="1.2"/>
<text x="468.60" y="134.1" style="font-size:14.24px;font-weight:400;font-family:&quot;Liberation Sans&quot;" fill="#444444" textLength="19.80" lengthAdjust="spacingAndGlyphs"  stroke="#444444" stroke-width="0.22">AV</text>
<g stroke="#3C96D0" stroke-width="1.3" fill="none" stroke-linecap="round" stroke-linejoin="round"><path d="M469.2,138.3 H477.6 M471.8,135.8 L469.2,138.3 L471.8,140.8"/><path d="M479.6,138.3 H488 M485.4,135.8 L488,138.3 L485.4,140.8"/></g>
<path d="M494.2,132 L497.1,134.6 L500,132" fill="none" stroke="#404040" stroke-width="1.3" stroke-linecap="round" stroke-linejoin="round"/>
<rect x="321.6" y="167.1" width="20.3" height="4.7" fill="#FFF000"/>
<path d="M324.2,165.2 L327.3,162 L330.4,159.2 L336.8,152.6 Q338.4,151.4 339.8,152.8 Q341.2,154.2 340,155.8 L333.4,162.2 L330.2,165.2 Z M327.3,162 L330.6,165" fill="none" stroke="#444444" stroke-width="1.2" stroke-linejoin="round"/>
<path d="M324.2,165.2 L327.3,162 L330.2,165.2 Z" fill="#444"/>
<path d="M350.4,160.9 L353.79999999999995,164.1 L357.2,160.9" fill="none" stroke="#404040" stroke-width="1.3" stroke-linecap="round" stroke-linejoin="round"/>
<rect x="370.1" y="167.1" width="19.6" height="4.7" fill="#E80000"/>
<path d="M374.8,165.5 L379.9,152 L385,165.5 M376.6,160.8 H383.2" fill="none" stroke="#444444" stroke-width="1.2"/>
<path d="M398.8,160.9 L402.1,164.1 L405.4,160.9" fill="none" stroke="#404040" stroke-width="1.3" stroke-linecap="round" stroke-linejoin="round"/>
<path d="M418.8,167.4 L423.9,156 L429,167.4 M420.4,163.6 H427.4" fill="none" stroke="#444444" stroke-width="1.2"/>
<text x="430.08" y="167.4" style="font-size:11.2px;font-weight:400;font-family:&quot;Liberation Sans&quot;" fill="#444444" textLength="8.02" lengthAdjust="spacingAndGlyphs" >a</text>
<path d="M443.8,161 L447.0,164 L450.2,161" fill="none" stroke="#404040" stroke-width="1.3" stroke-linecap="round" stroke-linejoin="round"/>
<rect x="463" y="149.7" width="1" height="26" fill="#D2D0CE"/><rect x="527.8" y="149.2" width="1" height="25.7" fill="#D2D0CE"/>
<path d="M473,167.5 L479.5,152 L486,167.5 M475.4,162 H483.6" fill="none" stroke="#444444" stroke-width="1.3"/>
<path d="M485.6,156.6 L488.2,153.4 L490.8,156.6" fill="none" stroke="#3C96D0" stroke-width="1.4" stroke-linecap="round"/>
<path d="M504.2,167.5 L509.5,156 L514.8,167.5 M506,163.4 H513" fill="none" stroke="#444444" stroke-width="1.3"/>
<path d="M514.6,153.8 L517.3,156.8 L520,153.8" fill="none" stroke="#3C96D0" stroke-width="1.4" stroke-linecap="round"/>
<path d="M537.2,167.5 L542.8,152 L548,165 M539.4,162 H546" fill="none" stroke="#444444" stroke-width="1.3"/>
<path d="M545.2,166.2 L552.2,159.6 L556,163.4 L549,170.4 Z M548.2,163.2 L552,167" fill="#F3F2F1" stroke="#A43BC0" stroke-width="1.5" stroke-linejoin="round"/>
<g fill="#ABABAB"><rect x="584" y="94.2" width="3.2" height="3" /><rect x="584" y="101.2" width="3.2" height="3"/><rect x="584" y="108.5" width="3.2" height="3"/></g>
<path d="M589.7,95.6 H602.1 M589.7,102.6 H602.1 M589.7,109.9 H602.1" stroke="#ABABAB" stroke-width="1.4"/>
<path d="M611.6,101.7 L615.35,105.2 L619.1,101.7" fill="none" stroke="#ABABAB" stroke-width="1.1" stroke-linecap="round" stroke-linejoin="round"/>
<path d="M633.4,93.6 V97.4 M632.2,101 H634.8 M632.2,104 H634.8 M632.2,108 H634.8 M632.2,111 H634.8" stroke="#ABABAB" stroke-width="0.9"/>
<path d="M637.3,95.6 H649.7 M637.3,102.6 H649.7 M637.3,109.9 H649.7" stroke="#ABABAB" stroke-width="1.4"/>
<path d="M659.5,101.7 L663.1,105.2 L666.7,101.7" fill="none" stroke="#ABABAB" stroke-width="1.1" stroke-linecap="round" stroke-linejoin="round"/>
<rect x="677.4" y="91.9" width="1" height="24.8" fill="#D2D0CE"/><rect x="640.5" y="120" width="1" height="25.4" fill="#D2D0CE"/>
<g stroke="#ABABAB" stroke-width="1.4" fill="none"><path d="M584.3,124.8 H602.1 M595,129.5 H602.1 M595,134.7 H602.1 M584.3,139.5 H602.1"/><path d="M584.8,132.1 H592.4 M587.4,129.6 L584.8,132.1 L587.4,134.6"/><path d="M613.5,124.8 H631.5 M624.4,129.5 H631.5 M624.4,134.7 H631.5 M613.5,139.5 H631.5"/><path d="M613.8,132.1 H621.4 M618.8,129.6 L621.4,132.1 L618.8,134.6"/></g>
<g stroke="#ABABAB" stroke-width="1.2" fill="none"><path d="M650.4,128.4 H657 M659.8,128.4 H666.7 M650.4,132.1 H657 M659.8,132.1 H666.7 M650.4,136 H657 M659.8,136 H666.7"/></g>
<path d="M674,130.8 L677.5,134.2 L681,130.8" fill="none" stroke="#ABABAB" stroke-width="1.1" stroke-linecap="round" stroke-linejoin="round"/>
<rect x="609" y="148.2" width="27.4" height="28.5" fill="#C8C6C4" stroke="#A6A6A6" stroke-width="1"/>
<g stroke="#4A4A4A" stroke-width="1.6" fill="none"><path d="M584,153.8 H602.2 M584,159 H597.2 M584,163.6 H602.2 M584,168.8 H597.2"/><path d="M613.6,153.8 H632 M616.6,159 H629 M613.6,163.6 H632 M616.6,168.8 H629"/><path d="M643,153.8 H661.2 M648,159 H661.2 M643,163.6 H661.2 M648,168.8 H661.2"/><path d="M672,153.8 H690.4 M672,159 H690.4 M672,163.6 H690.4 M672,168.8 H690.4"/></g>
<path d="M694.8,95.6 H705.6 M694.8,100.4 H705.6 M694.8,105 H705.6 M694.8,109.9 H705.6" stroke="#505050" stroke-width="1.6"/>
<g stroke="#3C96D0" stroke-width="1.6" fill="none" stroke-linecap="round" stroke-linejoin="round"><path d="M689.1,96 V111"/><path d="M686.6,98.2 L689.1,95.4 L691.6,98.2 M686.6,108.6 L689.1,111.4 L691.6,108.6"/></g>
<path d="M711.8,102.1 L714.9,105.2 L718,102.1" fill="none" stroke="#404040" stroke-width="1.4" stroke-linecap="round" stroke-linejoin="round"/>
<g stroke="#404040" stroke-width="1.4" fill="none" stroke-linecap="round" stroke-linejoin="round"><path d="M735.6,94.5 V112.2 M732.8,109.2 L735.6,112.2 L738.4,109.2"/><path d="M745,103.2 V112.2 M742.6,109.6 L745,112.2 L747.4,109.6"/></g>
<path d="M740.8,102.3 L745,93.9 L749.3,102.3 M742.1,99.6 H748" stroke="#3C96D0" stroke-width="1.5" fill="none"/>
<path d="M756.5,102.1 L760.1,105.2 L763.7,102.1" fill="none" stroke="#404040" stroke-width="1.4" stroke-linecap="round" stroke-linejoin="round"/>
<path d="M734.6,125.8 H731.2 V138.2 H734.6 M746.8,125.8 H750.2 V138.2 H746.8 M736.3,131.7 H746" stroke="#404040" stroke-width="1.4" fill="none"/>
<g stroke="#3C96D0" stroke-width="1.5" fill="none" stroke-linecap="round" stroke-linejoin="round"><path d="M740.4,123.4 V129.4 M738.4,125.2 L740.4,123 L742.4,125.2 M740.4,134 V140.4 M738.4,138.4 L740.4,140.8 L742.4,138.4"/></g>
<path d="M756.5,131.3 L760.1,134.7 L763.7,131.3" fill="none" stroke="#404040" stroke-width="1.4" stroke-linecap="round" stroke-linejoin="round"/>
<g stroke="#ABABAB" stroke-width="1.2" fill="#F3F2F1"><path d="M731.2,155 H742.6 L748.6,161.2 H736.2 Z"/><rect x="738.2" y="160.6" width="12.2" height="8.8"/><path d="M740.4,164.2 H748.2 M740.4,166.6 H748.2" fill="none"/></g>
<path d="M756.5,160.8 L760.1,163.9 L763.7,160.8" fill="none" stroke="#ABABAB" stroke-width="1.1" stroke-linecap="round" stroke-linejoin="round"/>
<rect x="800.4" y="90.9" width="37.2" height="35.1" fill="#FFFFFF" stroke="#8A8A8A" stroke-width="1.2"/>
<rect x="809.9" y="99.8" width="11.8" height="11.1" fill="none" stroke="#505050" stroke-width="1.4"/>
<rect x="815.5" y="104" width="8" height="8" fill="#FFFFFF"/>
<path d="M816.6,118 L822.5,105 L828.4,118 M818.6,113.8 H826.4" fill="none" stroke="#4A9FD8" stroke-width="1.5"/>
<path d="M814.75,158 L818.525,161.3 L822.3,158" fill="none" stroke="#505050" stroke-width="1.3" stroke-linecap="round" stroke-linejoin="round"/>
<rect x="872.4" y="90.9" width="37.5" height="35.1" fill="#FFFFFF" stroke="#8A8A8A" stroke-width="1.2"/>
<circle cx="894.2" cy="105.3" r="6.3" fill="none" stroke="#555" stroke-width="1.5"/><path d="M889.8,109.8 L882.3,117.2" stroke="#555" stroke-width="1.5" stroke-linecap="round"/>
<path d="M886.9,158 L890.75,161.3 L894.6,158" fill="none" stroke="#505050" stroke-width="1.3" stroke-linecap="round" stroke-linejoin="round"/>
<path d="M949.8,112.2 Q949.8,123.6 960.6,123.6 Q971.4,123.6 971.4,112.2 M960.6,123.6 V129.3" fill="none" stroke="#555" stroke-width="1.5"/>
<rect x="953.3" y="93.2" width="14.6" height="25.4" rx="7.3" fill="#7BB4EA" stroke="#2D6FB0" stroke-width="1.5"/>
<path d="M956,160 L959.8,163.6 L963.6,160" fill="none" stroke="#505050" stroke-width="1.2" stroke-linecap="round" stroke-linejoin="round"/>
<rect x="1020.85" y="98.75" width="33.099999999999866" height="25.100000000000005" fill="#FFFFFF" stroke="#6A6A6A" stroke-width="1.3"/>
<rect x="1022.2" y="100.1" width="30.399999999999864" height="22.400000000000006" fill="none" stroke="#B4B4B4" stroke-width="1.4"/>
<rect x="1023.5" y="101.39999999999999" width="27.799999999999862" height="19.800000000000004" fill="#FFFFFF" stroke="#6A6A6A" stroke-width="1.1"/>
<path d="M1023.5,106 H1051.3 M1044.5,106 V121.2" stroke="#6A6A6A" stroke-width="1.1"/>
<path d="M1024.5,92.6 H1033.4 L1028.4,101.6 H1032.6 L1018.4,115.4 L1022.8,104.4 H1018.6 Z" fill="#FFD25A" stroke="#F0962A" stroke-width="1.3" stroke-linejoin="round"/>
<path d="M1172.3,196.1 L1178.2,190.4 L1184.1,196.1" fill="none" stroke="#404040" stroke-width="1.3"/>
<rect x="1123.8" y="48.2" width="14.5" height="35.8" fill="#FFFFFF" stroke="#D0D0D0" stroke-width="1"/>
<path d="M1129.6,63.4 L1132.2,65.8 L1129.6,68.2" fill="none" stroke="#606060" stroke-width="1.3"/>
<g fill="none" stroke="#404040" stroke-width="1.4" stroke-linejoin="round"><path d="M1161.2,60 V56.4 H1175.6 V66.4 H1172.4 L1170,69"/><circle cx="1163.8" cy="65" r="3.6"/><path d="M1156.6,74.6 Q1157.8,69.4 1163.8,69.4 Q1169.8,69.4 1171,74.6"/></g>
<path d="M540.4,24.4 L545.2,29 L550,24.4" fill="none" stroke="#F9D0BF" stroke-width="1.5" stroke-linecap="round" stroke-linejoin="round"/>
<rect x="1175.3" y="204.5" width="17.3" height="17.9" fill="#FFFFFF" stroke="#8A8A8A" stroke-width="1"/>
<path d="M1179.6,214.7 L1184.15,210.1 L1188.7,214.7 Z" fill="#111"/>
<rect x="1175.8" y="550.2" width="16.6" height="19" fill="#FFFFFF" stroke="#8A8A8A" stroke-width="1"/>
<rect x="1175.8" y="572.2" width="16.6" height="18" fill="#FFFFFF" stroke="#8A8A8A" stroke-width="1"/>
<path d="M1180,579.2 L1184.1,583.4 L1188.2,579.2 Z" fill="#111"/>
<path d="M1178.4,602.4 L1184.1,594.4 L1189.8,602.4 Z M1178.4,609.2 L1184.1,601.2 L1189.8,609.2 Z" fill="#6A6A6A"/>
<path d="M1178.4,615 L1184.1,623 L1189.8,615 Z M1178.4,621.6 L1184.1,629.6 L1189.8,621.6 Z" fill="#6A6A6A"/>
<rect x="309.5" y="424.5" width="17.5" height="21.5" fill="#FFFFFF" stroke="#D6D6D6" stroke-width="1"/>
<path d="M314.2,430.8 L318.4,435 L314.2,439.2" fill="none" stroke="#8A8A8A" stroke-width="1.6"/>
<path d="M401,415.4 L343,431.2" stroke="#EE5A48" stroke-width="5.8" stroke-linecap="round"/>
<path d="M330.2,434.6 L346.8,419.6 L344.4,430.4 L351.8,439.4 Z" fill="#EE5A48" stroke="#EE5A48" stroke-width="1.4" stroke-linejoin="round"/>
<g fill="none" stroke="#505050" stroke-width="1.2"><path d="M743,668.2 L747,665.2 L751,668.2 M737,672.5 H756.4 M737,677.5 H756.4 M737,682.5 H756.4"/><path d="M821,676 H813.4 V666.4 H830.4 V671"/><circle cx="825" cy="675.6" r="2.4" stroke-width="1.5"/><path d="M825,671.4 V673 M825,678.2 V679.8 M820.8,675.6 H822.4 M827.6,675.6 H829.2 M822,672.6 L823.2,673.8 M826.8,677.4 L828,678.6 M828,672.6 L826.8,673.8 M823.2,677.4 L822,678.6" stroke-width="1.3"/></g>
<path d="M948.3,672.8 H958.8 M964,673.8 H1085.8 M1025,670.6 V677 M1092,673 H1101.5 M1096.75,668.5 V677.5" fill="none" stroke="#7A7A7A" stroke-width="1.2"/>
<rect x="990.6" y="667" width="6.1" height="12.6" fill="#404040"/>
<g fill="none" stroke="#555" stroke-width="1.2" stroke-linejoin="round"><rect x="1162.6" y="669.6" width="6.4" height="6.6"/><path d="M1160,670.4 L1157.4,672.9 L1160,675.4 M1171.6,670.4 L1174.2,672.9 L1171.6,675.4 M1163.3,666.6 L1165.8,664 L1168.3,666.6 M1163.3,679.2 L1165.8,681.8 L1168.3,679.2"/></g>
<g fill="none" stroke="#4A4A4A" stroke-width="1.25" stroke-linejoin="round" stroke-linecap="round"><circle cx="144.3" cy="666.9" r="2"/><path d="M146.8,674.4 L146.9,672.3 Q148.6,671.8 150.2,670.7 Q151.4,669.8 151,668.8 Q150.6,668 149.6,668.4 Q147,670 144.3,670 Q141.6,670 139,668.4 Q138,668 137.6,668.8 Q137.4,669.8 138.6,670.7 Q140.2,671.8 141.8,672.3 L141.6,675.6 L140,680 Q139.8,681.6 141.2,681.6 Q142.2,681.6 142.6,680.6 L144.3,676.6 L145.2,678.2"/><path d="M147.8,674.6 L153.2,681.2 M153.2,674.6 L147.8,681.2"/></g>
</svg>
</body></html>
